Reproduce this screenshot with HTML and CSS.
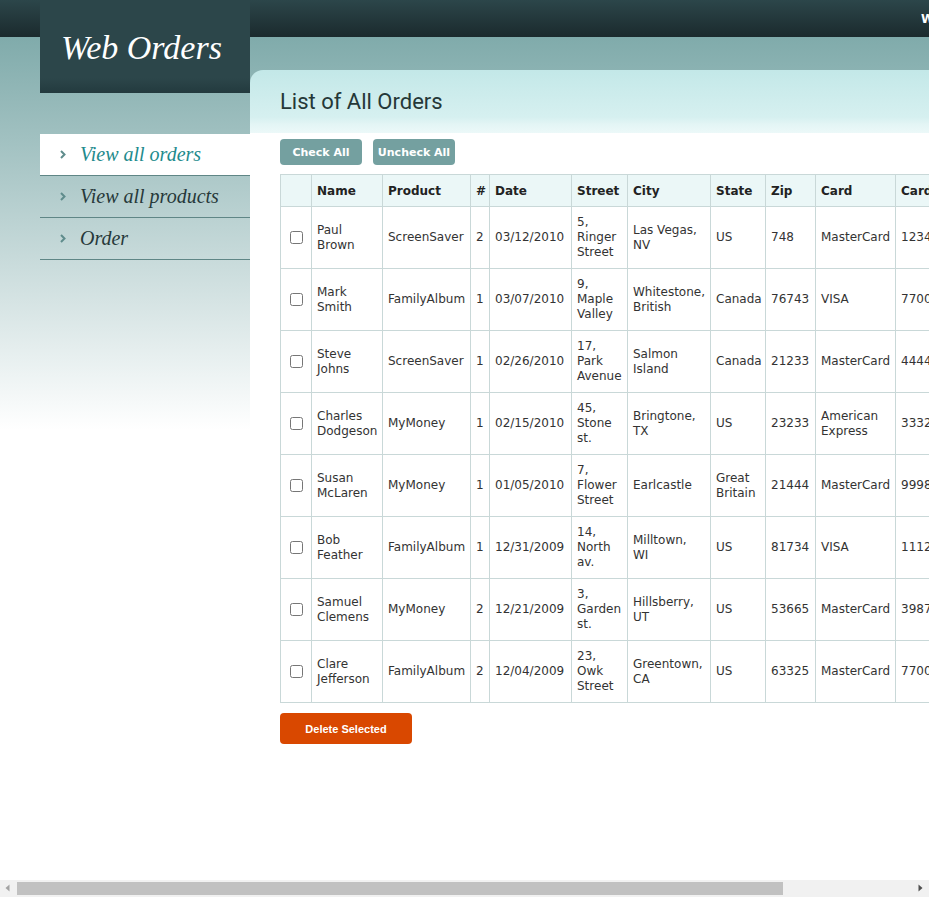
FILE: index.html
```html
<!DOCTYPE html>
<html lang="en">
<head>
<meta charset="utf-8">
<title>Web Orders</title>
<link rel="stylesheet" href="styles.css">
</head>
<body>
<div class="page">
  <aside class="sidebar">
    <div class="logo">Web Orders</div>
    <nav class="nav">
      <a class="nav-item active" href="#"><svg class="chev" width="6" height="9" viewBox="0 0 6 9"><polyline points="1,1 4.5,4.5 1,8" fill="none" stroke="#5f8c8c" stroke-width="2"/></svg><span>View all orders</span></a>
      <a class="nav-item" href="#"><svg class="chev" width="6" height="9" viewBox="0 0 6 9"><polyline points="1,1 4.5,4.5 1,8" fill="none" stroke="#5f8c8c" stroke-width="2"/></svg><span>View all products</span></a>
      <a class="nav-item" href="#"><svg class="chev" width="6" height="9" viewBox="0 0 6 9"><polyline points="1,1 4.5,4.5 1,8" fill="none" stroke="#5f8c8c" stroke-width="2"/></svg><span>Order</span></a>
    </nav>
  </aside>
  <main class="main">
    <div class="userbar">Welcome, Tester! | <a href="#" class="logout">Logout</a></div>
    <div class="panel-head"><h2 class="title">List of All Orders</h2></div>
    <div class="panel-body">
      <div class="actions">
        <button class="btn">Check All</button>
        <button class="btn">Uncheck All</button>
      </div>
      <table class="orders">
        <colgroup>
          <col class="c-chk"><col class="c-name"><col class="c-prod"><col class="c-qty"><col class="c-date"><col class="c-street"><col class="c-city"><col class="c-state"><col class="c-zip"><col class="c-card"><col class="c-num"><col class="c-exp"><col class="c-edit">
        </colgroup>
        <thead>
          <tr><th></th><th>Name</th><th>Product</th><th>#</th><th>Date</th><th>Street</th><th>City</th><th>State</th><th>Zip</th><th>Card</th><th>Card Number</th><th>Exp</th><th></th></tr>
        </thead>
        <tbody>
          <tr><td class="chk"><input type="checkbox"></td><td>Paul Brown</td><td>ScreenSaver</td><td>2</td><td>03/12/2010</td><td>5, Ringer Street</td><td>Las Vegas, NV</td><td>US</td><td>748</td><td>MasterCard</td><td>123456789012</td><td>12/10</td><td></td></tr>
          <tr><td class="chk"><input type="checkbox"></td><td>Mark Smith</td><td>FamilyAlbum</td><td>1</td><td>03/07/2010</td><td>9, Maple Valley</td><td>Whitestone, British</td><td>Canada</td><td>76743</td><td>VISA</td><td>770077007700</td><td>01/11</td><td></td></tr>
          <tr><td class="chk"><input type="checkbox"></td><td>Steve Johns</td><td>ScreenSaver</td><td>1</td><td>02/26/2010</td><td>17, Park Avenue</td><td>Salmon Island</td><td>Canada</td><td>21233</td><td>MasterCard</td><td>444444444444</td><td>03/11</td><td></td></tr>
          <tr><td class="chk"><input type="checkbox"></td><td>Charles Dodgeson</td><td>MyMoney</td><td>1</td><td>02/15/2010</td><td>45, Stone st.</td><td>Bringtone, TX</td><td>US</td><td>23233</td><td>American Express</td><td>333222333222</td><td>04/12</td><td></td></tr>
          <tr><td class="chk"><input type="checkbox"></td><td>Susan McLaren</td><td>MyMoney</td><td>1</td><td>01/05/2010</td><td>7, Flower Street</td><td>Earlcastle</td><td>Great Britain</td><td>21444</td><td>MasterCard</td><td>999888999888</td><td>05/11</td><td></td></tr>
          <tr><td class="chk"><input type="checkbox"></td><td>Bob Feather</td><td>FamilyAlbum</td><td>1</td><td>12/31/2009</td><td>14, North av.</td><td>Milltown, WI</td><td>US</td><td>81734</td><td>VISA</td><td>111222111222</td><td>06/12</td><td></td></tr>
          <tr><td class="chk"><input type="checkbox"></td><td>Samuel Clemens</td><td>MyMoney</td><td>2</td><td>12/21/2009</td><td>3, Garden st.</td><td>Hillsberry, UT</td><td>US</td><td>53665</td><td>MasterCard</td><td>398765432101</td><td>02/11</td><td></td></tr>
          <tr><td class="chk"><input type="checkbox"></td><td>Clare Jefferson</td><td>FamilyAlbum</td><td>2</td><td>12/04/2009</td><td>23, Owk Street</td><td>Greentown, CA</td><td>US</td><td>63325</td><td>MasterCard</td><td>770077007700</td><td>07/11</td><td></td></tr>
        </tbody>
      </table>
      <button class="delete">Delete Selected</button>
    </div>
  </main>
</div>
<div class="hscroll">
  <span class="arrow"><svg width="17" height="17" viewBox="0 0 17 17"><polygon points="9.5,4.5 9.5,11.5 5.5,8" fill="#a3a3a3"/></svg></span>
  <span class="thumb"></span>
  <span class="track"></span>
  <span class="arrow"><svg width="17" height="17" viewBox="0 0 17 17"><polygon points="6.5,4.5 6.5,11.5 10.5,8" fill="#505050"/></svg></span>
</div>
</body>
</html>
```

FILE: styles.css
```css
html {
  height: 100%;
  overflow: hidden;
  background-color: #ffffff;
  background-image: linear-gradient(to bottom, #2c464a 0, #1b2a2d 37px, #80abab 37px, #ffffff 430px);
  background-repeat: no-repeat;
}

body {
  margin: 0;
  width: 1085px;
  font-family: "DejaVu Sans", Verdana, sans-serif;
}

.page {
  display: flex;
  align-items: flex-start;
}

/* Sidebar */
.sidebar {
  flex: none;
  width: 210px;
  margin-left: 40px;
}

.logo {
  box-sizing: border-box;
  height: 93px;
  padding: 28px 0 0 21px;
  background: linear-gradient(to bottom, #2c464a 0, #2c464a 78px, #233a3e 93px);
  color: #ffffff;
  font-family: "Liberation Serif", "Times New Roman", serif;
  font-style: italic;
  font-size: 34px;
  line-height: 40px;
}

.nav {
  margin-top: 41px;
  display: flex;
  flex-direction: column;
}

.nav-item {
  display: flex;
  align-items: center;
  gap: 14px;
  height: 41px;
  padding-left: 20px;
  border-bottom: 1px solid #5f8686;
  color: #27393a;
  text-decoration: none;
  font-family: "Liberation Serif", "Times New Roman", serif;
  font-style: italic;
  font-size: 20px;
}

.nav-item.active {
  background: #ffffff;
  color: #1e8b8d;
}

.chev {
  flex: none;
}

/* Main */
.main {
  flex: 1;
  min-width: 0;
}

.userbar {
  height: 37px;
  display: flex;
  align-items: center;
  padding-left: 671px;
  margin-bottom: 33px;
  color: #ffffff;
  font-weight: bold;
  font-size: 12px;
  white-space: nowrap;
}

.logout {
  color: #ffffff;
  text-decoration: none;
  margin-left: 4px;
}

.panel-head {
  height: 63px;
  box-sizing: border-box;
  padding-left: 30px;
  display: flex;
  align-items: center;
  border-radius: 13px 0 0 0;
  background: linear-gradient(to bottom, #c3e8e8 0, #d6f0f0 75%, #e3f5f5 86%, #ecf9f9 100%);
}

.title {
  margin: 0;
  font-family: Roboto, "Liberation Sans", sans-serif;
  font-weight: 400;
  font-size: 22px;
  color: #253838;
}

.panel-body {
  background: #ffffff;
  padding: 6px 0 200px 30px;
}

.actions {
  display: flex;
  gap: 11px;
  margin-bottom: 9px;
}

.btn {
  width: 82px;
  height: 26px;
  padding: 0;
  border: 0;
  border-radius: 4px;
  background: #74a0a0;
  color: #ffffff;
  font-family: "DejaVu Sans", Verdana, sans-serif;
  font-weight: bold;
  font-size: 11px;
}

/* Table */
.orders {
  table-layout: fixed;
  width: 793px;
  border-collapse: collapse;
  color: #333333;
  font-size: 12px;
  line-height: 15px;
}

.c-chk { width: 31px; }
.c-name { width: 71px; }
.c-prod { width: 88px; }
.c-qty { width: 19px; }
.c-date { width: 82px; }
.c-street { width: 56px; }
.c-city { width: 83px; }
.c-state { width: 55px; }
.c-zip { width: 50px; }
.c-card { width: 80px; }
.c-num { width: 100px; }
.c-exp { width: 50px; }
.c-edit { width: 28px; }

.orders th,
.orders td {
  border: 1px solid #c9d8d8;
  padding: 8px 5px;
  text-align: left;
  vertical-align: middle;
}

.orders th {
  padding: 9px 5px 7px;
  background: #ebf7f7;
  color: #222222;
  font-weight: bold;
  line-height: 15px;
  white-space: nowrap;
  overflow: hidden;
}

.orders td.chk {
  padding: 0;
  text-align: center;
}

.chk input {
  width: 13px;
  height: 13px;
  margin: 0 0 0 1px;
  vertical-align: middle;
}

.delete {
  margin-top: 10px;
  width: 132px;
  height: 31px;
  border: 0;
  border-radius: 4px;
  background: #d94800;
  color: #ffffff;
  font-family: "Liberation Sans", Arial, sans-serif;
  font-weight: bold;
  font-size: 11px;
}

/* Fake browser scrollbar */
.hscroll {
  position: fixed;
  left: 0;
  bottom: 0;
  width: 100%;
  height: 17px;
  display: flex;
  background: #f1f1f1;
}

.arrow {
  flex: none;
  width: 17px;
  height: 17px;
}

.arrow svg {
  display: block;
}

.thumb {
  flex: none;
  width: 766px;
  height: 13px;
  margin-top: 2px;
  background: #c1c1c1;
}

.track {
  flex: 1;
}
```
